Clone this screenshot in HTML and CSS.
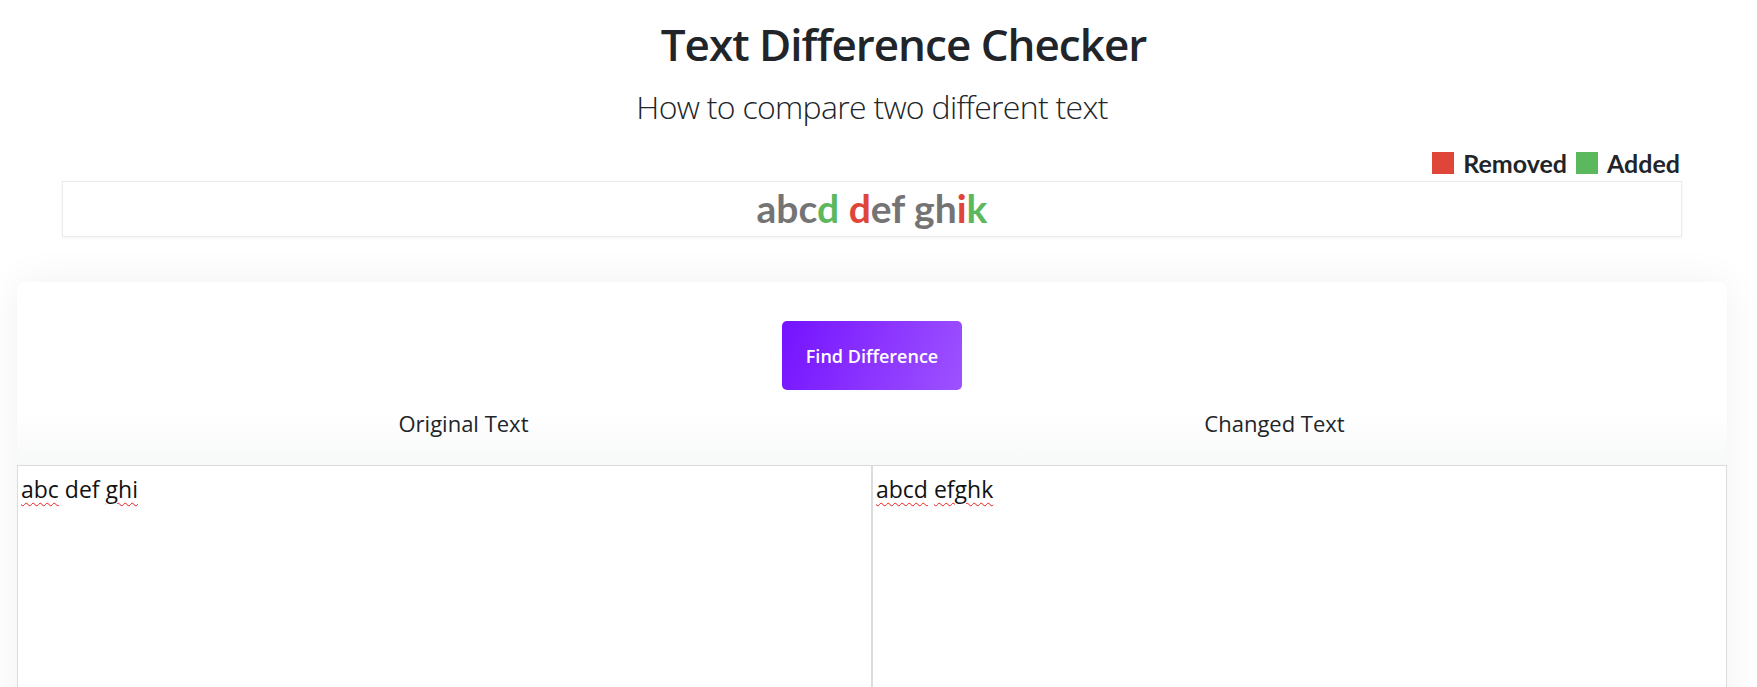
FILE: index.html
```html
<!DOCTYPE html>
<html lang="en">
<head>
<meta charset="utf-8">
<title>Text Difference Checker</title>
<link rel="stylesheet" href="styles.css">
</head>
<body>
<div class="page">
  <header class="hero">
    <h1 class="title">Text Difference Checker</h1>
    <p class="subtitle">How to compare two different text</p>
  </header>

  <section class="result-wrap">
    <div class="legend">
      <span class="swatch swatch-removed"></span><span class="legend-label">Removed</span>
      <span class="swatch swatch-added"></span><span class="legend-label">Added</span>
    </div>
    <div class="result"><span class="same">abc</span><span class="add">d</span><span class="same"> </span><span class="del">d</span><span class="same">ef gh</span><span class="del">i</span><span class="add">k</span></div>
  </section>

  <section class="card">
    <div class="card-head">
      <button class="btn-find" type="button">Find Difference</button>
      <div class="labels">
        <div class="label">Original Text</div>
        <div class="label">Changed Text</div>
      </div>
    </div>
    <div class="editors">
      <div class="editor editor-left" contenteditable="true" spellcheck="false"><span class="typo">abc</span> def <span class="typo">ghi</span></div>
      <div class="editor editor-right" contenteditable="true" spellcheck="false"><span class="typo">abcd</span> <span class="typo">efghk</span></div>
    </div>
  </section>
</div>
</body>
</html>
```

FILE: styles.css
```css
* { box-sizing: border-box; }

html, body {
  margin: 0;
  padding: 0;
  background: #ffffff;
}

body {
  font-family: "Open Sans", "Noto Sans", sans-serif;
  color: #212529;
  overflow: hidden;
}

.page {
  width: 1744px;
}

.hero {
  text-align: center;
}

.title {
  margin: 14px 0 0 0;
  padding-left: 63px;
  font-size: 44px;
  line-height: 60px;
  font-weight: 600;
  letter-spacing: -1px;
  color: #212529;
}

.subtitle {
  margin: 11px 0 0 0;
  font-size: 32px;
  line-height: 44px;
  font-weight: 300;
  letter-spacing: -0.7px;
  color: #212529;
}

.result-wrap {
  margin: 20px 62px 0 62px;
}

.legend {
  display: flex;
  justify-content: flex-end;
  align-items: flex-end;
  gap: 9px;
  padding-right: 2px;
  font-family: "Lato", sans-serif;
  font-weight: 700;
  font-size: 25px;
  line-height: 29px;
  color: #212529;
}

.swatch {
  display: inline-block;
  width: 22px;
  height: 22px;
  margin-bottom: 4px;
}

.swatch-removed { background: #df4538; }
.swatch-added { background: #5cb85c; }

.result {
  margin-top: 3px;
  height: 56px;
  border: 1px solid #ebebeb;
  box-shadow: 0 1px 3px rgba(0, 0, 0, 0.05);
  background: #fff;
  text-align: center;
  font-family: "Lato", sans-serif;
  font-weight: 700;
  font-size: 39px;
  line-height: 52px;
  padding-bottom: 2px;
  white-space: nowrap;
}

.same { color: #747474; }
.add { color: #5cb85c; }
.del { color: #df4538; }

.card {
  margin: 45px 17px 0 17px;
  background: #fff;
  border-radius: 8px 8px 0 0;
  box-shadow: 0 0 40px rgba(0, 0, 0, 0.06);
}

.card-head {
  padding: 39px 0 0 0;
  display: flex;
  flex-direction: column;
  align-items: center;
  border-radius: 8px 8px 0 0;
  background: linear-gradient(to bottom, #ffffff 0%, #ffffff 72%, #f7f8f8 100%);
}

.btn-find {
  border: 0;
  border-radius: 5px;
  padding: 0 24px;
  height: 69px;
  background: linear-gradient(110deg, #7412ff 0%, #8a33ff 50%, #9d52ff 100%);
  color: #fff;
  font-family: "Open Sans", sans-serif;
  font-weight: 600;
  font-size: 18px;
  line-height: 24px;
  cursor: pointer;
}

.labels {
  align-self: stretch;
  display: grid;
  grid-template-columns: 1fr 1fr;
  margin-top: 17px;
  padding: 0 47px 26px 41px;
}

.label {
  text-align: center;
  font-size: 22px;
  line-height: 32px;
  color: #212529;
}

.editors {
  display: grid;
  grid-template-columns: 855px 1fr;
  background: #fff;
}

.editor {
  height: 320px;
  padding: 7px 3px 3px 3px;
  border: 1px solid #dcdcdc;
  font-family: "Open Sans", sans-serif;
  font-size: 23px;
  line-height: 32px;
  color: #111;
  outline: none;
  background: #fff;
}

.typo {
  text-decoration: underline wavy #e8201a;
  text-decoration-thickness: 1px;
  text-underline-offset: 4px;
}
```
